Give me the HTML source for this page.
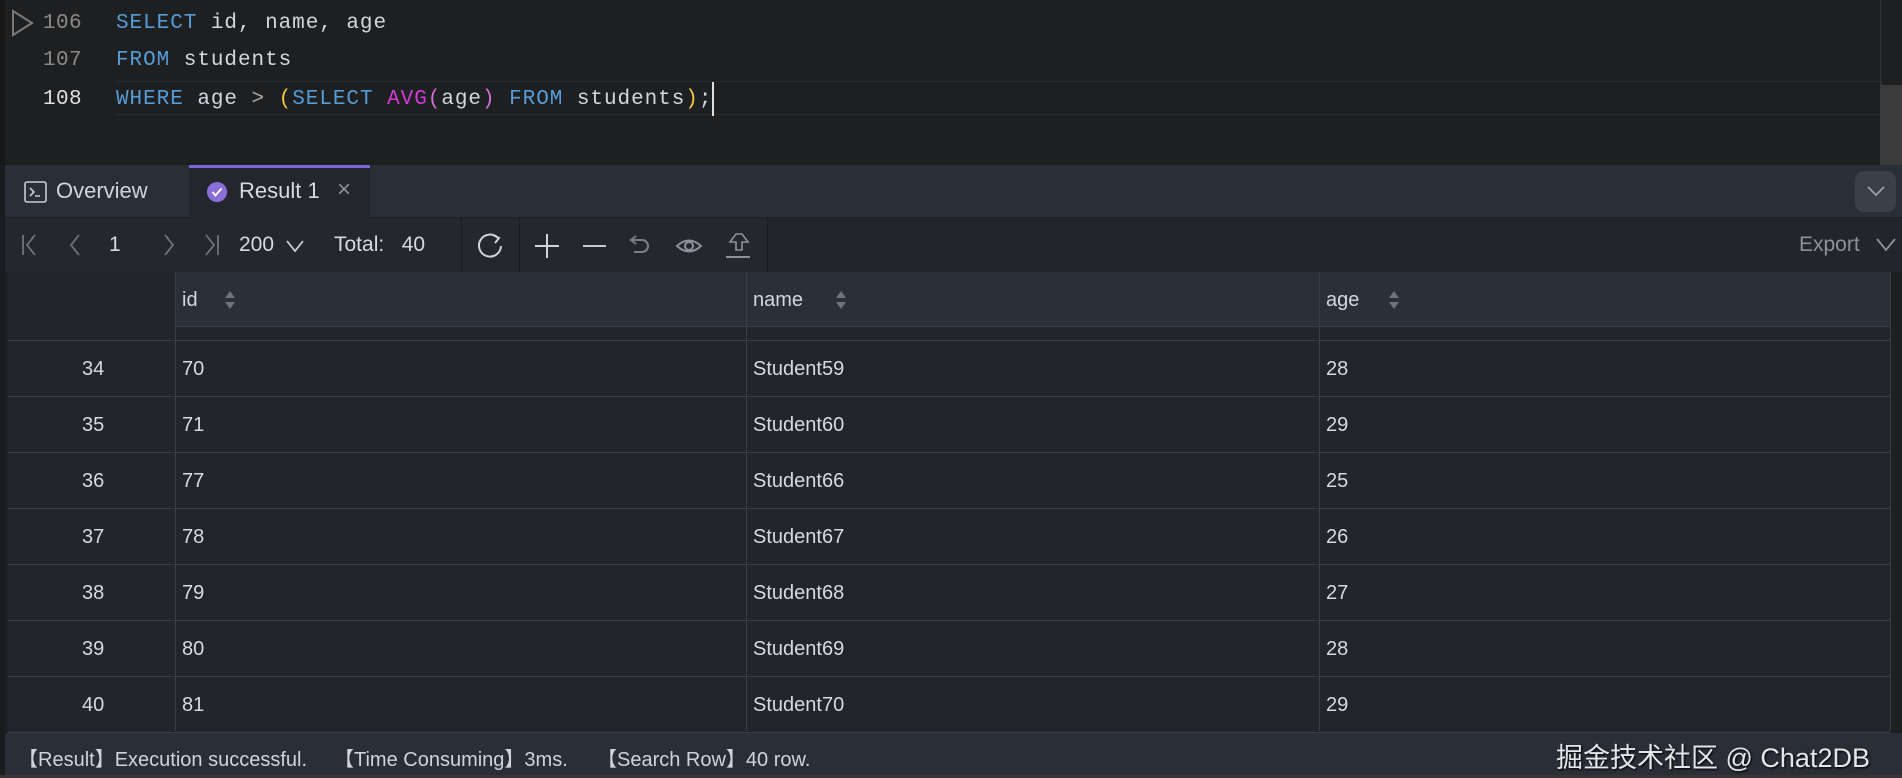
<!DOCTYPE html>
<html><head><meta charset="utf-8"><style>
*{margin:0;padding:0;box-sizing:border-box}
body{width:1902px;height:778px;overflow:hidden;background:#1e1f21;font-family:"Liberation Sans","Noto Sans CJK SC",sans-serif;color:#d3d7de;position:relative}
.a{position:absolute;white-space:nowrap}
.code{font-family:"Liberation Mono",monospace;font-size:21px;letter-spacing:0.95px;line-height:24px}
.ln{color:#8a8a8a;width:60px;text-align:right;left:22px;letter-spacing:0.4px}
.k{color:#569cd6}.m{color:#d33bd6}.y{color:#f2c744}.p{color:#d070d6}
.row{position:absolute;left:8px;width:1882px;height:56px;border-bottom:1px solid #3a3e46;background:#22252b}
.row div{position:absolute;top:0;height:56px;line-height:56px;font-size:20px;color:#d6dae2}
.vl{position:absolute;width:1px;background:#3a3e46}
svg{position:absolute}
</style></head><body>
<!-- editor -->
<div class="a" style="left:0;top:0;width:5px;height:165px;background:#181818"></div>
<div class="a" style="left:116px;top:81px;width:1766px;height:34px;border:1px solid #2c2c2c;border-left:none"></div>
<svg style="left:10px;top:9px" width="26" height="28" viewBox="0 0 26 28"><path d="M3 2 L22 14 L3 26 Z" fill="none" stroke="#7a7a7a" stroke-width="2"/></svg>
<div class="a code ln" style="top:12px">106</div>
<div class="a code ln" style="top:49px">107</div>
<div class="a code ln" style="top:88px;color:#e0e0e0">108</div>
<div class="a code" style="left:116px;top:12px"><span class="k">SELECT</span> id, name, age</div>
<div class="a code" style="left:116px;top:49px"><span class="k">FROM</span> students</div>
<div class="a code" style="left:116px;top:88px"><span class="k">WHERE</span> age <span style="color:#aaa">&gt;</span> <span class="y">(</span><span class="k">SELECT</span> <span class="m">AVG</span><span class="p">(</span>age<span class="p">)</span> <span class="k">FROM</span> students<span class="y">)</span>;<span style="position:relative"><span style="position:absolute;left:0;top:-6px;width:2px;height:34px;background:#ddd"></span></span></div>
<div class="a" style="left:1880px;top:0;width:1px;height:165px;background:#333"></div>
<div class="a" style="left:1880px;top:85px;width:22px;height:80px;background:#3b3b3b"></div>
<!-- tab bar -->
<div class="a" style="left:0;top:165px;width:1902px;height:53px;background:#2a2e37;border-bottom:1px solid #1d1f24"></div>
<div class="a" style="left:0;top:165px;width:5px;height:613px;background:#1a1b1e"></div>
<svg style="left:24px;top:181px" width="23" height="22"><rect x="1" y="1" width="21" height="20" rx="2" fill="none" stroke="#c8ccd4" stroke-width="1.6"/><path d="M6 7 L10 11 L6 15 M11 15 H16" fill="none" stroke="#c8ccd4" stroke-width="1.6"/></svg>
<div class="a" style="left:56px;top:178px;font-size:22px;color:#cfd3da">Overview</div>
<div class="a" style="left:189px;top:165px;width:181px;height:53px;background:#23262d;border-top:3px solid #7b65d9"></div>
<svg style="left:206px;top:181px" width="22" height="22"><circle cx="11" cy="11" r="10" fill="#8a6fdb"/><path d="M6.5 11 L9.5 14.5 L15.5 7.5" fill="none" stroke="#fff" stroke-width="1.8"/></svg>
<div class="a" style="left:239px;top:178px;font-size:22px;color:#d6dae2">Result 1</div>
<div class="a" style="left:337px;top:176px;font-size:24px;color:#8b8f97">×</div>
<div class="a" style="left:1855px;top:171px;width:41px;height:41px;border-radius:9px;background:#3a3f49"></div>
<svg style="left:1865px;top:183px" width="22" height="16"><path d="M3 4 L11 12 L19 4" fill="none" stroke="#9aa0a8" stroke-width="1.8"/></svg>
<!-- toolbar -->
<div class="a" style="left:5px;top:218px;width:1897px;height:54px;background:#22252b"></div>
<div class="a" style="left:5px;top:218px;width:762px;height:54px;background:#24272e"></div>
<div class="vl" style="left:461px;top:218px;height:54px;background:#1a1c20"></div>
<div class="vl" style="left:519px;top:218px;height:54px;background:#1a1c20"></div>
<div class="vl" style="left:767px;top:218px;height:54px;background:#1a1c20"></div>
<svg style="left:20px;top:232px" width="200" height="26" fill="none" stroke="#6f747c" stroke-width="1.8"><path d="M3 3 V23 M15 3 L7 13 L15 23"/><path d="M59 3 L51 13 L59 23"/><path d="M145 3 L153 13 L145 23"/><path d="M186 3 L194 13 L186 23 M198 3 V23"/></svg>
<div class="a" style="left:109px;top:233px;font-size:21px;color:#d6dae2">1</div>
<div class="a" style="left:239px;top:233px;font-size:21px;color:#d6dae2">200</div>
<svg style="left:284px;top:238px" width="22" height="16"><path d="M3 3 L11 13 L19 3" fill="none" stroke="#c8ccd4" stroke-width="1.8"/></svg>
<div class="a" style="left:334px;top:233px;font-size:21px;color:#d6dae2">Total:&nbsp;&nbsp; 40</div>
<svg style="left:476px;top:230px" width="300" height="32" fill="none" stroke-width="2"><path d="M22 8 A11 11 0 1 0 25 16" stroke="#d0d4da"/><path d="M17 5 L23 8 L19 13" stroke="#d0d4da"/><path d="M71 4 V28 M59 16 H83" stroke="#d0d4da"/><path d="M107 16 H130" stroke="#c6cad0"/><path d="M156 10 H166 A6 6 0 0 1 166 22 H158 M160 6 L155 10 L160 14" stroke="#7a7f87"/><path d="M201 16 Q213 5 225 16 Q213 27 201 16 Z" stroke="#8d929a"/><circle cx="213" cy="16" r="4" stroke="#8d929a"/><path d="M260 20 V12 H254 L260 4 L266 4 L272 12 H266 V20 Z" stroke="#8d929a" stroke-width="1.6"/><path d="M250 27 H274" stroke="#8d929a"/></svg>
<div class="a" style="left:1799px;top:233px;font-size:21px;color:#8d9199">Export</div>
<svg style="left:1874px;top:236px" width="24" height="18"><path d="M3 3 L12 14 L21 3" fill="none" stroke="#8d9199" stroke-width="1.8"/></svg>
<!-- header -->
<div class="a" style="left:8px;top:272px;width:1882px;height:55px;background:#2b2f38;border-bottom:1px solid #3a3e46"></div>
<div class="a" style="left:8px;top:272px;width:167px;height:55px;background:#22252b"></div>
<div class="a" style="left:8px;top:327px;width:1882px;height:14px;background:#22252b;border-bottom:1px solid #3a3e46"></div>
<div class="a" style="left:182px;top:289px;font-size:20px">id</div>
<div class="a" style="left:753px;top:289px;font-size:20px">name</div>
<div class="a" style="left:1326px;top:289px;font-size:20px">age</div>
<svg style="left:224px;top:289px" width="12" height="22" fill="#6f747c"><path d="M6 2 L11 9 H1 Z M6 20 L11 13 H1 Z"/></svg>
<svg style="left:835px;top:289px" width="12" height="22" fill="#6f747c"><path d="M6 2 L11 9 H1 Z M6 20 L11 13 H1 Z"/></svg>
<svg style="left:1388px;top:289px" width="12" height="22" fill="#6f747c"><path d="M6 2 L11 9 H1 Z M6 20 L11 13 H1 Z"/></svg>
<!-- rows -->
<div class="row" style="top:341px"><div style="left:74px">34</div><div style="left:174px">70</div><div style="left:745px">Student59</div><div style="left:1318px">28</div></div>
<div class="row" style="top:397px"><div style="left:74px">35</div><div style="left:174px">71</div><div style="left:745px">Student60</div><div style="left:1318px">29</div></div>
<div class="row" style="top:453px"><div style="left:74px">36</div><div style="left:174px">77</div><div style="left:745px">Student66</div><div style="left:1318px">25</div></div>
<div class="row" style="top:509px"><div style="left:74px">37</div><div style="left:174px">78</div><div style="left:745px">Student67</div><div style="left:1318px">26</div></div>
<div class="row" style="top:565px"><div style="left:74px">38</div><div style="left:174px">79</div><div style="left:745px">Student68</div><div style="left:1318px">27</div></div>
<div class="row" style="top:621px"><div style="left:74px">39</div><div style="left:174px">80</div><div style="left:745px">Student69</div><div style="left:1318px">28</div></div>
<div class="row" style="top:677px"><div style="left:74px">40</div><div style="left:174px">81</div><div style="left:745px">Student70</div><div style="left:1318px">29</div></div>
<div class="vl" style="left:175px;top:272px;height:459px"></div>
<div class="vl" style="left:746px;top:272px;height:459px"></div>
<div class="vl" style="left:1319px;top:272px;height:459px"></div>
<div class="vl" style="left:1890px;top:272px;height:459px"></div>
<!-- status -->
<div class="a" style="left:5px;top:733px;width:1897px;height:42px;background:#2a2e37"></div>
<div class="a" style="left:0;top:775px;width:1902px;height:3px;background:#3a3436"></div>
<div class="a" style="left:18px;top:743px;font-size:20px;color:#d0d4da">【Result】Execution successful.</div>
<div class="a" style="left:334px;top:743px;font-size:20px;color:#d0d4da">【Time Consuming】3ms.</div>
<div class="a" style="left:597px;top:743px;font-size:20px;color:#d0d4da">【Search Row】40 row.</div>
<div class="a" style="left:1556px;top:736px;font-size:27px;color:#e4e6ea;text-shadow:1px 1px 2px #000">掘金技术社区 @ Chat2DB</div>
</body></html>
